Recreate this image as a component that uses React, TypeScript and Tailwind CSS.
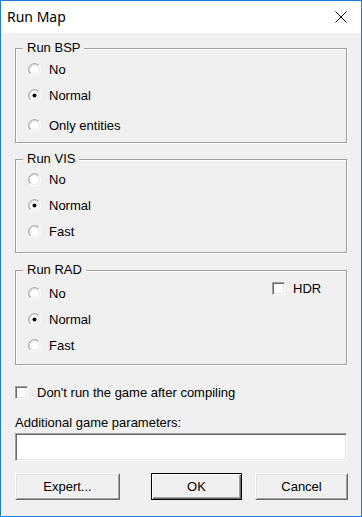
import React from "react";

function Radio({ checked }: { checked?: boolean }) {
  return (
    <svg width="13" height="13" viewBox="0 0 13 13" className="shrink-0">
      <circle cx="6.5" cy="6.5" r="6" fill="#ffffff" />
      <path d="M2.26 10.74 A6 6 0 0 1 10.74 2.26" fill="none" stroke="#a0a0a0" strokeWidth="1" />
      <path d="M10.74 2.26 A6 6 0 0 1 2.26 10.74" fill="none" stroke="#ffffff" strokeWidth="1" />
      <path d="M2.96 10.04 A5 5 0 0 1 10.04 2.96" fill="none" stroke="#c8c8c8" strokeWidth="1" />
      <path d="M10.04 2.96 A5 5 0 0 1 2.96 10.04" fill="none" stroke="#e3e3e3" strokeWidth="1" />
      {checked && <circle cx="6.5" cy="6.5" r="2" fill="#000000" />}
    </svg>
  );
}

function Check() {
  return (
    <div className="w-[13px] h-[13px] shrink-0 bg-white border border-t-[#a0a0a0] border-l-[#a0a0a0] border-r-white border-b-white shadow-[inset_1px_1px_0_#696969,inset_-1px_-1px_0_#e3e3e3]" />
  );
}

function RadioRow({ label, checked, extra }: { label: string; checked?: boolean; extra?: string }) {
  return (
    <div className={`h-[26px] flex items-center gap-[8px] ${extra ?? ""}`}>
      <Radio checked={checked} />
      <span className="leading-[15px]">{label}</span>
    </div>
  );
}

function Group({
  title,
  legendWidth,
  className,
  children,
}: {
  title: string;
  legendWidth?: string;
  className: string;
  children: React.ReactNode;
}) {
  return (
    <div
      className={`relative w-[332px] border border-[#a0a0a0] shadow-[1px_1px_0_#ffffff,inset_1px_1px_0_#ffffff] ${className}`}
    >
      <span className="absolute left-[7px] top-[-9px] px-[4px] leading-[15px] bg-[#f0f0f0]">{title}</span>
      {children}
    </div>
  );
}

function Button({ label, def, className }: { label: string; def?: boolean; className: string }) {
  return (
    <div
      className={`h-[27px] flex items-center justify-center bg-[#f0f0f0] ${
        def
          ? "border border-black shadow-[inset_1px_1px_0_#ffffff,inset_-1px_-1px_0_#696969,inset_-2px_-2px_0_#a0a0a0]"
          : "border border-t-white border-l-white border-r-[#696969] border-b-[#696969] shadow-[inset_1px_1px_0_#e3e3e3,inset_-1px_-1px_0_#a0a0a0]"
      } ${className}`}
    >
      <span className="leading-[15px]">{label}</span>
    </div>
  );
}

export default function App() {
  return (
    <div className="w-[362px] h-[517px] border border-[#1c7fd6] bg-[#f0f0f0] flex flex-col font-['Liberation_Sans',Arial,sans-serif] text-[13px] text-black">
      <div className="h-[32px] bg-white flex items-center pl-[6px] shrink-0">
        <span className="font-['Noto_Sans',sans-serif] text-[14px] leading-[18px]">Run Map</span>
        <svg width="12" height="12" viewBox="0 0 12 12" className="ml-auto mr-[14px]">
          <path d="M0.5 0.5 L11.5 11.5 M11.5 0.5 L0.5 11.5" stroke="#000" strokeWidth="1" />
        </svg>
      </div>
      <div className="flex-1 flex flex-col pl-[14px]">
        <Group title="Run BSP" className="mt-[15px] h-[95px]">
          <div className="pl-[12px] pt-[7px] flex flex-col">
            <RadioRow label="No" />
            <RadioRow label="Normal" checked />
            <RadioRow label="Only entities" extra="mt-[4px]" />
          </div>
        </Group>
        <Group title="Run VIS" className="mt-[16px] h-[94px]">
          <div className="pl-[12px] pt-[6px] flex flex-col">
            <RadioRow label="No" />
            <RadioRow label="Normal" checked />
            <RadioRow label="Fast" />
          </div>
        </Group>
        <Group title="Run RAD" className="mt-[17px] h-[95px]">
          <div className="pl-[12px] flex">
            <div className="w-[244px] pt-[9px] flex flex-col">
              <RadioRow label="No" />
              <RadioRow label="Normal" checked />
              <RadioRow label="Fast" />
            </div>
            <div className="pt-[11px] flex items-center gap-[8px] h-[13px] box-content">
              <Check />
              <span className="leading-[15px]">HDR</span>
            </div>
          </div>
        </Group>
        <div className="mt-[21px] h-[13px] flex items-center gap-[9px]">
          <Check />
          <span className="leading-[15px]">Don't run the game after compiling</span>
        </div>
        <div className="mt-[16px] leading-[15px]">Additional game parameters:</div>
        <div className="mt-[3px] w-[332px] h-[28px] bg-white border border-t-[#a0a0a0] border-l-[#a0a0a0] border-r-white border-b-white shadow-[inset_1px_1px_0_#696969,inset_-1px_-1px_0_#e3e3e3]" />
        <div className="mt-[12px] flex">
          <Button label="Expert..." className="w-[105px]" />
          <Button label="OK" def className="w-[91px] ml-[31px]" />
          <Button label="Cancel" className="w-[93px] ml-[13px]" />
        </div>
      </div>
    </div>
  );
}
